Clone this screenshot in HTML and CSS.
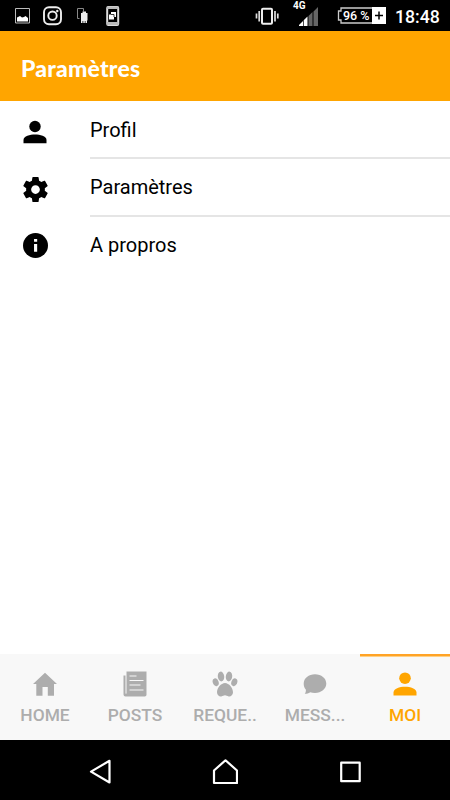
FILE: index.html
```html
<!DOCTYPE html>
<html lang="fr">
<head>
<meta charset="utf-8">
<title>Paramètres</title>
<link rel="stylesheet" href="styles.css">
</head>
<body>
<div class="status">
  <svg class="status-left" width="130" height="31" viewBox="0 0 130 31">
    <path d="M15.500 8.500h14v14.500h-14z" fill="none" stroke="#bbb"/>
    <path d="M17 21.500v-4l3-1.500 2 1.500 2-.5 1.500-1 2.500 2v3.500z" fill="#fff"/>
    <rect x="44" y="7.200" width="17" height="17" rx="5" fill="none" stroke="#eee" stroke-width="1.900"/>
    <circle cx="52.500" cy="15.700" r="4.200" fill="none" stroke="#eee" stroke-width="1.900"/>
    <circle cx="57.300" cy="11" r="1.200" fill="#eee"/>
    <path d="M79.500 18.500h-2v-10h6v3" fill="none" stroke="#888"/>
    <path d="M81 13h1.500v-1.500h3.500V13h1.500v7.500H87V23h-1.500v-2h-.7v2h-1.500v-2h-.8v2H81z" fill="#eee"/>
    <rect x="107.200" y="7" width="11" height="18" rx="1" fill="none" stroke="#ddd" stroke-width="2"/>
    <path d="M107 6.500h11.500v2.500H107zM107 22h11.500v3H107z" fill="#bbb"/>
    <path d="M111 12h5v5h-2v2.500h-5v-5h2z" fill="#fff"/>
    <path d="M111 14.500h3v2.500" fill="none" stroke="#222" stroke-width=".9"/>
  </svg>
  <div class="status-right">
    <svg width="24" height="31" viewBox="255 0 24 31">
      <rect x="262" y="8.800" width="10" height="15" rx="1" fill="none" stroke="#eee" stroke-width="2"/>
      <path d="M259.200 11v10.500M275 11v10.500" stroke="#ddd" stroke-width="1.700"/>
      <path d="M256.500 13.500v5M277.800 13.500v5" stroke="#ddd" stroke-width="1.700"/>
    </svg>
    <div class="signal">
      <span class="network">4G</span>
      <svg width="20" height="19" viewBox="0 0 20 19"><path d="M0 19v-1l4-4v5zM4.700 19v-5.700L8.500 9.500V19z" fill="#fff"/><path d="M9.500 19V9l4-4v14zM14.500 19V4.500L19 0v19z" fill="#666"/></svg>
    </div>
    <div class="battery">
      <svg width="50" height="17" viewBox="0 0 50 17"><path d="M36 1H4v3H1.500v9H4v3h32" fill="none" stroke="#ccc" stroke-width="1.300"/><path d="M35 0h14v17H35z" fill="#fff"/><path d="M42 4.500v8M38 8.500h8" stroke="#000" stroke-width="1.500"/></svg>
      <span class="percent">96 %</span>
    </div>
    <span class="clock">18:48</span>
  </div>
</div>
<header class="header"><h1>Paramètres</h1></header>
<main class="list">
  <div class="row">
    <svg class="row-icon" viewBox="0 0 24 24"><circle cx="12" cy="6.500" r="5.700"/><path d="M.5 23.300v-3.300C.5 16.300 7 14.600 12 14.600s11.500 1.700 11.500 5.400v3.300z"/></svg>
    <span class="row-label">Profil</span>
  </div>
  <div class="row">
    <svg class="row-icon gear" viewBox="2 2 20 20"><path d="M19.430 12.980c.04-.32.07-.64.07-.98s-.03-.66-.07-.98l2.110-1.650c.19-.15.24-.42.12-.64l-2-3.460c-.12-.22-.39-.3-.61-.22l-2.490 1c-.52-.4-1.080-.73-1.690-.98l-.38-2.650C14.460 2.180 14.250 2 14 2h-4c-.25 0-.46.18-.49.42l-.38 2.650c-.61.25-1.170.59-1.690.98l-2.490-1c-.23-.09-.49 0-.61.22l-2 3.460c-.13.22-.07.49.12.64l2.110 1.650c-.04.32-.07.65-.07.98s.03.66.07.98l-2.110 1.650c-.19.15-.24.42-.12.64l2 3.460c.12.22.39.3.61.22l2.490-1c.52.4 1.080.73 1.690.98l.38 2.650c.03.24.24.42.49.42h4c.25 0 .46-.18.49-.42l.38-2.650c.61-.25 1.170-.59 1.690-.98l2.490 1c.23.09.49 0 .61-.22l2-3.460c.12-.22.07-.49-.12-.64l-2.110-1.650zM12 15.500c-1.930 0-3.500-1.570-3.500-3.500s1.570-3.500 3.500-3.500 3.500 1.570 3.500 3.500-1.570 3.500-3.500 3.500z"/></svg>
    <span class="row-label">Paramètres</span>
  </div>
  <div class="row">
    <svg class="row-icon info" viewBox="0 0 24 24"><circle cx="12" cy="12" r="12"/><path d="M10.600 5.800h3v2.600h-3zM10.600 10.500h3v7.500h-3z" fill="#fff"/></svg>
    <span class="row-label">A propros</span>
  </div>
</main>
<nav class="tabs">
  <div class="tab"><svg viewBox="0 0 26 26"><path d="M13 1.800l12 11.200h-3v11.700h-6.200V16h-5.300v8.700H4.300V13H1z"/></svg><span>HOME</span></div>
  <div class="tab"><svg viewBox="0 0 26 26"><path d="M4.500 .5H24.500v23.200q0 1.800-1.800 1.800H3.500q-2 0-2-2V4.500h2v17.600q0 .8.500.8t.5-.8z"/><path d="M7.500 5h7M7.500 9.500h14M7.500 14h11M7.500 19h14" stroke="#f8f8f8" stroke-width="1.100"/></svg><span>POSTS</span></div>
  <div class="tab"><svg viewBox="0 0 26 26"><ellipse cx="9" cy="5.500" rx="3.200" ry="4.900" transform="rotate(-8 9 5.500)"/><ellipse cx="17" cy="5.500" rx="3.200" ry="4.900" transform="rotate(8 17 5.500)"/><ellipse cx="3.700" cy="11.300" rx="2.900" ry="4" transform="rotate(-20 3.700 11.300)"/><ellipse cx="22.300" cy="11.300" rx="2.900" ry="4" transform="rotate(20 22.300 11.300)"/><path d="M13 12c-4 0-8 5.200-8 9.300 0 3 2.300 4.400 4.300 4.100 1.600-.2 2.400-1.100 3.700-1.100s2.100.9 3.700 1.100c2 .3 4.300-1.100 4.300-4.100 0-4.100-4-9.300-8-9.300z"/></svg><span>REQUE..</span></div>
  <div class="tab"><svg viewBox="0 0 26 26"><path d="M13 3.300c6.300 0 11.300 4 11.300 9.300s-5 9.400-11.300 9.400c-1.800 0-3.400-.3-4.800-.8-1.700 1.200-3.400 1.600-5.500 1.600 1-1.300 1.200-2.400 1.200-4.100C2.200 17 1.700 14.900 1.700 12.600 1.700 7.300 6.700 3.300 13 3.300z"/></svg><span>MESS...</span></div>
  <div class="tab active"><svg viewBox="0 0 26 26"><circle cx="13" cy="7.200" r="5.800"/><path d="M1.500 24.500v-3c0-3.700 6-5.700 11.500-5.700s11.500 2 11.500 5.700v3z"/></svg><span>MOI</span></div>
</nav>
<footer class="system">
  <svg width="26" height="26" viewBox="0 0 26 26"><path d="M22.500 1.800v21.700L4 12.600z"/></svg>
  <svg width="26" height="26" viewBox="0 0 26 26"><path d="M2 24V11.500L13.500 1.300 25 11.500V24z"/></svg>
  <svg width="26" height="26" viewBox="0 0 26 26"><path d="M4.200 3.700h18.500v18.500H4.200z"/></svg>
</footer>
</body>
</html>
```
FILE: styles.css
```css
* { box-sizing: border-box; }
body {
  margin: 0;
  width: 450px;
  height: 800px;
  display: flex;
  flex-direction: column;
  background: #fff;
  color: #000;
  font-family: Roboto, sans-serif;
  overflow: hidden;
}
svg { display: block; flex: none; }
.status {
  height: 31px;
  display: flex;
  justify-content: space-between;
  background: #000;
  color: #fff;
}
.status-right {
  display: flex;
  width: 195px;
}
.signal {
  position: relative;
  width: 25px;
  margin-left: 14px;
  padding: 7px 0 0 6px;
}
.network {
  position: absolute;
  left: 0;
  top: 0;
  font-size: 10px;
  line-height: 11px;
  font-weight: 700;
}
.battery {
  position: relative;
  margin: 7px 0 0 19px;
}
.percent {
  position: absolute;
  left: 6px;
  top: 1px;
  font-size: 12.5px;
  line-height: 16px;
  font-weight: 500;
  white-space: nowrap;
}
.clock {
  margin-left: 8px;
  font-size: 17.7px;
  line-height: 34px;
  font-weight: 500;
}
.header {
  height: 70px;
  padding: 3px 21px 0;
  display: flex;
  align-items: center;
  background: #ffa500;
  color: #fff;
}
.header h1 {
  margin: 0;
  font: 900 23px/32px Lato, sans-serif;
  letter-spacing: 0.2px;
}
.list { flex: 1; }
.row {
  height: 57.5px;
  display: flex;
  align-items: center;
}
.row:first-child { height: 58px; }
.row-icon {
  width: 24px;
  height: 24px;
  margin: 4px 43px 0 23px;
}
.gear, .info {
  width: 25px;
  margin-right: 42px;
}
.info { height: 25px; margin-top: 0; }
.gear { height: 25px; margin-top: 3px; }
.row-label {
  flex: 1;
  height: 100%;
  border-bottom: 2px solid #e5e5e5;
  font-size: 20px;
  line-height: 57px;
}
.row:first-child .row-label { line-height: 58px; }
.row:last-child .row-label { border-bottom: 0; }
.tabs {
  height: 86px;
  display: grid;
  grid-template-columns: repeat(5, 1fr);
  background: #f8f8f8;
}
.tab {
  display: flex;
  flex-direction: column;
  align-items: center;
  padding-top: 17px;
  color: #adadad;
  font-size: 17.4px;
  line-height: 20px;
  font-weight: 500;
}
.tab svg {
  width: 26px;
  height: 26px;
  margin-bottom: 8px;
  fill: currentColor;
}
.active {
  color: #ffa500;
  background: linear-gradient(#ffa326 2px, #ffd083 2px, #ffd083 3px, transparent 3px);
}
.system {
  height: 60px;
  display: flex;
  align-items: center;
  justify-content: center;
  gap: 99px;
  padding-top: 4px;
  background: #000;
}
.system svg {
  fill: none;
  stroke: #fff;
  stroke-width: 2.2;
  stroke-linejoin: round;
}
```
